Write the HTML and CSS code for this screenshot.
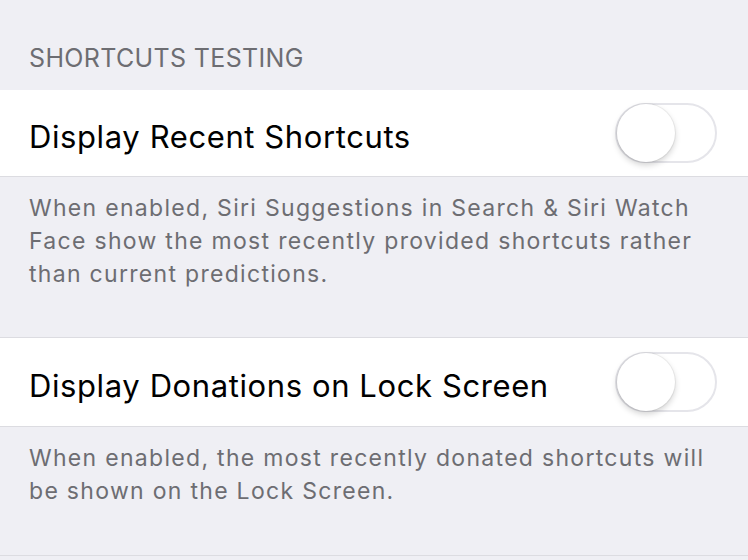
FILE: index.html
```html
<!DOCTYPE html>
<html>
<head>
<meta charset="utf-8">
<link rel="stylesheet" href="styles.css">
</head>
<body>
<div class="page">
  <div class="section-header">SHORTCUTS TESTING</div>
  <div class="cell first">
    <span class="cell-title">Display Recent Shortcuts</span>
    <span class="switch"><span class="knob"></span></span>
  </div>
  <div class="section-footer">When enabled, Siri Suggestions in Search &amp; Siri Watch Face show the most recently provided shortcuts rather than current predictions.</div>
  <div class="cell">
    <span class="cell-title">Display Donations on Lock Screen</span>
    <span class="switch"><span class="knob"></span></span>
  </div>
  <div class="section-footer last">When enabled, the most recently donated shortcuts will be shown on the Lock Screen.</div>
  <div class="bottom-line"></div>
</div>
</body>
</html>
```
FILE: styles.css
```css
html, body {
  margin: 0;
  padding: 0;
  background: #efeff4;
}
.page {
  width: 748px;
  height: 560px;
  overflow: hidden;
  font-family: "Inter", "Noto Sans", sans-serif;
}
.section-header {
  padding: 46px 0 0 29px;
  height: 90px;
  box-sizing: border-box;
  font-size: 25px;
  color: #6d6d72;
  line-height: 24px;
  letter-spacing: 0.35px;
}
.cell {
  background: #fff;
  height: 90px;
  box-sizing: border-box;
  display: flex;
  align-items: center;
  justify-content: space-between;
  padding: 0 31px 0 29px;
  border-top: 1px solid #dcdce1;
  border-bottom: 1px solid #dcdce1;
}
.cell.first {
  border-top: none;
  height: 87px;
}
.cell-title {
  font-size: 31px;
  color: #000;
  letter-spacing: 0.6px;
  margin-top: 6px;
}
.switch {
  width: 102px;
  height: 60px;
  box-sizing: border-box;
  border-radius: 30px;
  border: 2px solid #e5e5ea;
  background: #fff;
  position: relative;
  display: block;
}
.knob {
  position: absolute;
  left: 0;
  top: -1px;
  width: 58px;
  height: 58px;
  border-radius: 50%;
  background: #fff;
  box-shadow: 0 3px 6px rgba(0,0,0,0.18), 0 0 0 1px rgba(0,0,0,0.05);
}
.section-footer {
  padding: 15px 30px 0 29px;
  font-size: 23px;
  line-height: 33px;
  letter-spacing: 1.3px;
  color: #6d6d72;
  height: 160px;
  box-sizing: border-box;
}
.section-footer.last {
  height: 128px;
}
.bottom-line {
  height: 1px;
  background: #dcdce1;
}
```
